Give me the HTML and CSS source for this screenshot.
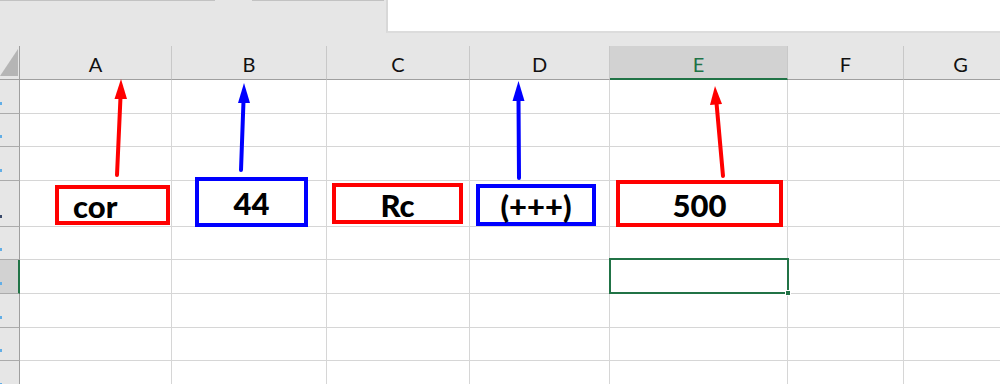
FILE: index.html
```html
<!DOCTYPE html>
<html>
<head>
<meta charset="utf-8">
<link rel="stylesheet" href="styles.css">
</head>
<body>
<div class="topbar">
  <div class="tabstrip">
    <span class="tabline first"></span>
    <span class="tabline second"></span>
  </div>
  <div class="namebox"></div>
</div>
<div class="grid">
  <div class="corner"><span class="tri"></span></div>
  <div class="h">A</div><div class="h">B</div><div class="h">C</div><div class="h">D</div><div class="h sel">E</div><div class="h">F</div><div class="h">G</div>

  <div class="rh"><span class="tick"></span></div><div class="c"></div><div class="c"></div><div class="c"></div><div class="c"></div><div class="c"></div><div class="c"></div><div class="c"></div>
  <div class="rh"><span class="tick"></span></div><div class="c"></div><div class="c"></div><div class="c"></div><div class="c"></div><div class="c"></div><div class="c"></div><div class="c"></div>
  <div class="rh"><span class="tick"></span></div><div class="c"></div><div class="c"></div><div class="c"></div><div class="c"></div><div class="c"></div><div class="c"></div><div class="c"></div>
  <div class="rh"><span class="tick dark"></span></div><div class="c"></div><div class="c"></div><div class="c"></div><div class="c"></div><div class="c"></div><div class="c"></div><div class="c"></div>
  <div class="rh"><span class="tick"></span></div><div class="c"></div><div class="c"></div><div class="c"></div><div class="c"></div><div class="c"></div><div class="c"></div><div class="c"></div>
  <div class="rh sel"><span class="tick"></span></div><div class="c"></div><div class="c"></div><div class="c"></div><div class="c"></div><div class="c"></div><div class="c"></div><div class="c"></div>
  <div class="rh"><span class="tick"></span></div><div class="c"></div><div class="c"></div><div class="c"></div><div class="c"></div><div class="c"></div><div class="c"></div><div class="c"></div>
  <div class="rh"><span class="tick"></span></div><div class="c"></div><div class="c"></div><div class="c"></div><div class="c"></div><div class="c"></div><div class="c"></div><div class="c"></div>
  <div class="rh"><span class="tick"></span></div><div class="c"></div><div class="c"></div><div class="c"></div><div class="c"></div><div class="c"></div><div class="c"></div><div class="c"></div>
</div>

<div class="selection"><span class="handle"></span></div>

<svg class="arrows" width="1000" height="384" viewBox="0 0 1000 384">
  <g stroke-linecap="round">
    <line x1="117" y1="175" x2="120.5" y2="97" stroke="#ff0000" stroke-width="4"/>
    <polygon points="121,79 114.5,99 127,99" fill="#ff0000"/>
    <line x1="241" y1="170" x2="243.5" y2="101" stroke="#0000ff" stroke-width="4"/>
    <polygon points="244,83 238,103 250,103" fill="#0000ff"/>
    <line x1="519" y1="178" x2="518.5" y2="99" stroke="#0000ff" stroke-width="4"/>
    <polygon points="518.5,81 512.5,101 524.5,101" fill="#0000ff"/>
    <line x1="723" y1="176" x2="716.5" y2="103" stroke="#ff0000" stroke-width="4"/>
    <polygon points="715,86 710,105 722,104" fill="#ff0000"/>
  </g>
</svg>

<div class="shape red s1">cor</div>
<div class="shape blue s2">44</div>
<div class="shape red s3">Rc</div>
<div class="shape blue s4">(+++)</div>
<div class="shape red s5">500</div>
</body>
</html>
```
FILE: styles.css
```css
* { box-sizing: border-box; }
html, body { margin: 0; padding: 0; }
body {
  width: 1000px;
  height: 384px;
  overflow: hidden;
  background: #ffffff;
  position: relative;
  font-family: Lato, "Liberation Sans", sans-serif;
}

.topbar {
  height: 46px;
  background: #e6e6e6;
  display: flex;
  align-items: flex-start;
}
.tabstrip {
  width: 386px;
  display: flex;
  gap: 37px;
}
.tabline {
  height: 1px;
  background: #c2c2c2;
}
.tabline.first { width: 215px; }
.tabline.second { width: 132px; }
.namebox {
  flex: 1;
  height: 33px;
  background: #ffffff;
  border-left: 2px solid #d8d8d8;
  border-bottom: 2px solid #dcdcdc;
}

.grid {
  display: grid;
  width: 1018px;
  grid-template-columns: 20px 152px 155px 143px 140px 178px 116px 114px;
  grid-template-rows: 34px 34px 33px 34px 46px 33px 34px 34px 33px 34px;
}
.c {
  border-right: 1px solid #d6d6d6;
  border-bottom: 1px solid #d6d6d6;
}
.h {
  background: #e6e6e6;
  border-right: 1px solid #c8c8c8;
  border-bottom: 1px solid #9f9f9f;
  display: flex;
  align-items: center;
  justify-content: center;
  font-size: 20px;
  color: #111111;
  padding-top: 2px;
}
.h.sel {
  background: #d2d2d2;
  color: #217346;
  border-bottom: 2px solid #217346;
  padding-top: 3px;
}
.corner {
  background: #e6e6e6;
  border-right: 1px solid #9f9f9f;
  border-bottom: 1px solid #9f9f9f;
  padding: 3px 1px 3px 0;
  display: flex;
}
.tri {
  flex: 1;
  background: #b5b5b5;
  clip-path: polygon(0 100%, 100% 100%, 100% 0);
}
.rh {
  background: #e6e6e6;
  border-right: 1px solid #9f9f9f;
  border-bottom: 1px solid #ababab;
  display: flex;
  align-items: flex-end;
  padding-bottom: 8px;
}
.rh.sel {
  background: #d2d2d2;
  border-right: 2px solid #217346;
}
.tick {
  width: 2px;
  height: 3px;
  background: #62aee6;
}
.tick.dark { background: #3a4a6a; }

.selection {
  position: absolute;
  left: 609px;
  top: 258px;
  width: 180px;
  height: 36px;
  border: 2px solid #217346;
}
.handle {
  position: absolute;
  right: -4px;
  bottom: -4px;
  width: 6px;
  height: 6px;
  background: #217346;
  border: 1px solid #ffffff;
}

.arrows {
  position: absolute;
  left: 0;
  top: 0;
  pointer-events: none;
}

.shape {
  position: absolute;
  display: flex;
  align-items: center;
  justify-content: center;
  background: #ffffff;
  font-family: Lato, "Liberation Sans", sans-serif;
  font-weight: 900;
  font-size: 31px;
  color: #000000;
  border: 4px solid;
  padding-top: 2px;
}
.shape.red { border-color: #ff0000; }
.shape.blue { border-color: #0000ff; }
.s1 { left: 55px; top: 185px; width: 115px; height: 40px; justify-content: flex-start; padding-left: 14px; }
.s2 { left: 195px; top: 177px; width: 113px; height: 50px; }
.s3 { left: 332px; top: 183px; width: 131px; height: 41px; }
.s4 { left: 476px; top: 184px; width: 120px; height: 42px; }
.s5 { left: 616px; top: 180px; width: 167px; height: 47px; }
```
